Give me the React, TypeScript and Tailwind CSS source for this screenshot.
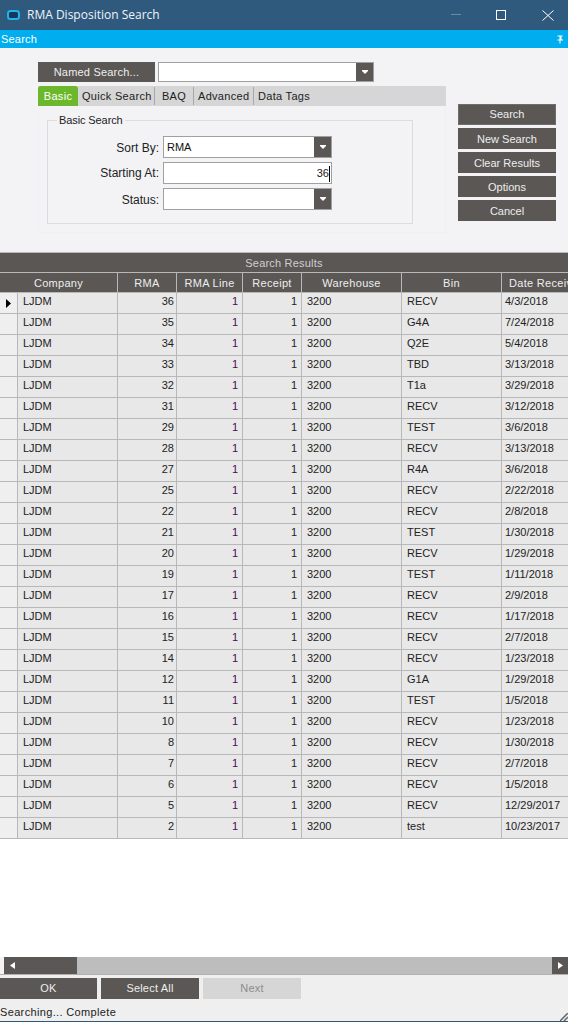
import React from "react";

const rows: [number, string, string][] = [
  [36, "RECV", "4/3/2018"], [35, "G4A", "7/24/2018"], [34, "Q2E", "5/4/2018"], [33, "TBD", "3/13/2018"],
  [32, "T1a", "3/29/2018"], [31, "RECV", "3/12/2018"], [29, "TEST", "3/6/2018"], [28, "RECV", "3/13/2018"],
  [27, "R4A", "3/6/2018"], [25, "RECV", "2/22/2018"], [22, "RECV", "2/8/2018"], [21, "TEST", "1/30/2018"],
  [20, "RECV", "1/29/2018"], [19, "TEST", "1/11/2018"], [17, "RECV", "2/9/2018"], [16, "RECV", "1/17/2018"],
  [15, "RECV", "2/7/2018"], [14, "RECV", "1/23/2018"], [12, "G1A", "1/29/2018"], [11, "TEST", "1/5/2018"],
  [10, "RECV", "1/23/2018"], [8, "RECV", "1/30/2018"], [7, "RECV", "2/7/2018"], [6, "RECV", "1/5/2018"],
  [5, "RECV", "12/29/2017"], [2, "test", "10/23/2017"],
];

const headers = ["RMA", "RMA Line", "Receipt", "Warehouse", "Bin", "Date Received"];
const gridCols = "grid grid-cols-[18px_100px_59px_66px_59px_100px_100px_91px] w-[593px]";

function DropButton() {
  return (
    <span className="w-[17px] self-stretch bg-[#5a5755] flex items-center justify-center">
      <svg width="6" height="4" viewBox="0 0 6 4"><path d="M0 0h6v1L3 4 0 1z" fill="#fff" /></svg>
    </span>
  );
}

function Combo({ className, value }: { className: string; value?: string }) {
  return (
    <div className={"flex border border-[#a0a0a0] bg-white " + className}>
      <span className="flex-1 pl-[3px] text-[11px] leading-[20px] text-[#111]">{value}</span>
      <DropButton />
    </div>
  );
}

function SideButton({ label, className = "" }: { label: string; className?: string }) {
  return (
    <div className={"h-[21px] w-[98px] bg-[#5a5755] text-[#eee] text-[11px] text-center " + className}>{label}</div>
  );
}

function Tab({ label, className }: { label: string; className: string }) {
  return <div className={"my-[1px] text-[11px] leading-[18px] text-[#222] tracking-[0.3px] " + className}>{label}</div>;
}

function FieldRow({ label, className, children }: { label: string; className: string; children: React.ReactNode }) {
  return (
    <div className="flex items-center h-[22px]">
      <span className={"w-[111px] mr-[4px] text-right text-[12px] text-[#222] whitespace-nowrap " + className}>{label}</span>
      {children}
    </div>
  );
}

export default function App() {
  return (
    <div className="w-[568px] h-[1022px] overflow-hidden flex flex-col bg-[#f3f3f6] font-['Liberation_Sans',Arial,sans-serif]">
      {/* Title bar */}
      <div className="h-[30px] bg-[#2f5a7e] flex items-center shrink-0">
        <svg className="ml-[7px]" width="13" height="10" viewBox="0 0 13 10">
          <rect x="1" y="1" width="11" height="8" rx="2.5" fill="#17365a" stroke="#1fb4ea" strokeWidth="2" />
        </svg>
        <span className="ml-[7px] text-[12px] text-[#f0f4f8] font-['Open_Sans',sans-serif] flex-1">RMA Disposition Search</span>
        <svg className="mr-[35px]" width="10" height="2" viewBox="0 0 10 2"><rect width="10" height="1" fill="#6d8aa3" /></svg>
        <svg className="mr-[36px]" width="10" height="10" viewBox="0 0 10 10"><rect x="0.5" y="0.5" width="9" height="9" fill="none" stroke="#fff" /></svg>
        <svg className="mr-[14px]" width="12" height="11" viewBox="0 0 12 11"><path d="M0.5 0.5l11 10M11.5 0.5l-11 10" stroke="#fff" fill="none" /></svg>
      </div>
      {/* Search strip */}
      <div className="h-[18px] bg-[#00adef] shrink-0 flex items-center justify-between pl-px">
        <span className="text-[11px] text-white tracking-[0.2px] leading-[18px]">Search</span>
        <svg className="mr-[4px]" width="8" height="9" viewBox="0 0 8 9">
          <path d="M1.500 0.500h5v1h-1v3h1.500v1h-5.500v-1h1.500v-3h-1.500zM3.500 1.500h0.500v3h-0.500zM3.500 5.500h1v3h-1z" fill="#fff" fillRule="evenodd" />
        </svg>
      </div>
      {/* Search form */}
      <div className="h-[204px] shrink-0 pt-[14px] pl-[38px] flex">
        <div className="w-[408px]">
          <div className="flex h-[20px]">
            <div className="w-[117px] bg-[#5a5755] text-[#eee] text-[11px] leading-[20px] text-center tracking-[0.2px]">Named Search...</div>
            <Combo className="ml-[3px] w-[216px]" />
          </div>
          <div className="mt-[4px] h-[20px] bg-[#d6d6d6] flex">
            <div className="w-[40px] bg-[#6cb82c] rounded-t-[3px] text-white text-[11px] leading-[20px] text-center tracking-[0.3px]">Basic</div>
            <Tab label="Quick Search" className="w-[77px] pl-[4px] border-r border-[#a8a8a8]" />
            <Tab label="BAQ" className="w-[39px] text-center border-r border-[#a8a8a8]" />
            <Tab label="Advanced" className="w-[60px] pl-[4px] border-r border-[#a8a8a8]" />
            <Tab label="Data Tags" className="w-[60px] pl-[4px]" />
          </div>
          <div className="h-[127px] border border-t-0 border-[#f0f0f2] pl-[8px] pt-[14px]">
            <div className="relative w-[366px] h-[104px] border border-[#dcdce0]">
              <span className="absolute left-[9px] top-[-7px] px-[2px] bg-[#f3f3f6] text-[11px] leading-[13px] text-[#222] tracking-[-0.1px]">Basic Search</span>
              <div className="pt-[15px] flex flex-col gap-[4px]">
                <FieldRow label="Sort By:" className="mt-[2px]"><Combo className="w-[169px] h-[22px]" value="RMA" /></FieldRow>
                <FieldRow label="Starting At:" className="mb-[1px]">
                  <div className="w-[169px] h-[22px] border border-[#a0a0a0] bg-white text-right text-[11px] leading-[20px] pr-px text-[#222]">
                    36<span className="inline-block w-px h-[16px] bg-black align-middle" />
                  </div>
                </FieldRow>
                <FieldRow label="Status:" className="mt-[2px]"><Combo className="w-[169px] h-[22px]" /></FieldRow>
              </div>
            </div>
          </div>
        </div>
        <div className="ml-[12px] pt-[42px] flex flex-col gap-[3px]">
          <SideButton label="Search" className="border border-[#706d6b] leading-[19px]" />
          <SideButton label="New Search" className="leading-[23px]" />
          <SideButton label="Clear Results" className="leading-[23px]" />
          <SideButton label="Options" className="leading-[23px]" />
          <SideButton label="Cancel" className="leading-[23px]" />
        </div>
      </div>
      {/* Results */}
      <div className="h-[20px] shrink-0 bg-[#5a5755] border-t border-[#b8b8b8] text-center text-[#cfcfcf] text-[11px] leading-[20px] tracking-[0.2px]">Search Results</div>
      <div className="h-[685px] shrink-0 bg-white overflow-hidden">
        <div className={gridCols + " h-[20px] bg-[#5a5755] border-t border-[#b8b8b8] text-[#eee] text-[11px] leading-[20px] tracking-[0.3px]"}>
          <div className="col-span-2 border-r border-[#b8b8b8] text-center">Company</div>
          {headers.map((h) => (
            <div key={h} className="border-r border-[#b8b8b8] text-center whitespace-nowrap overflow-hidden">{h}</div>
          ))}
        </div>
        {rows.map((r, i) => (
          <div key={r[0]} className={gridCols + " h-[21px] border-t border-[#b8b8b8] text-[11px] leading-[17px] text-[#222]"}>
            <div className="bg-[#efefef] border-r border-[#b8b8b8] flex items-center justify-center">
              {i === 0 && <svg width="5" height="9" viewBox="0 0 5 9"><path d="M0 0l5 4.500-5 4.500z" fill="#000" /></svg>}
            </div>
            <div className="bg-[#e8e8e8] border-r border-[#b8b8b8] pl-[5px]">LJDM</div>
            <div className="bg-[#e8e8e8] border-r border-[#b8b8b8] text-right pr-[2px]">{r[0]}</div>
            <div className="bg-[#e8e8e8] border-r border-[#b8b8b8] text-right pr-[4px] text-[#4a0a52]">1</div>
            <div className="bg-[#e8e8e8] border-r border-[#b8b8b8] text-right pr-[4px]">1</div>
            <div className="bg-[#e8e8e8] border-r border-[#b8b8b8] pl-[5px]">3200</div>
            <div className="bg-[#e8e8e8] border-r border-[#b8b8b8] pl-[5px]">{r[1]}</div>
            <div className="bg-[#e8e8e8] pl-[3px]">{r[2]}</div>
          </div>
        ))}
        <div className="w-[568px] border-t border-[#b8b8b8]" />
      </div>
      {/* Scrollbar */}
      <div className="h-[18px] shrink-0 bg-[#bdbdbd] border-b border-[#b0b0b0] flex">
        <div className="w-[4px] bg-[#f3f3f3]" />
        <div className="w-[73px] bg-[#5a5755] pl-[6px] flex items-center">
          <svg width="5" height="7" viewBox="0 0 5 7"><path d="M5 0v7L0 3.500z" fill="#fff" /></svg>
        </div>
        <div className="flex-1" />
        <div className="w-[16px] bg-[#5a5755] flex items-center justify-center">
          <svg width="5" height="7" viewBox="0 0 5 7"><path d="M0 0v7l5-3.500z" fill="#fff" /></svg>
        </div>
      </div>
      {/* Footer */}
      <div className="flex-1 bg-[#efefef] border-b border-[#2f5a7e] relative">
        <div className="flex gap-[4px] pt-[3px]">
          <div className="w-[97px] h-[21px] bg-[#5a5755] text-[#eee] text-[11px] leading-[21px] text-center tracking-[0.2px]">OK</div>
          <div className="w-[98px] h-[21px] bg-[#5a5755] text-[#eee] text-[11px] leading-[21px] text-center tracking-[0.2px]">Select All</div>
          <div className="w-[98px] h-[21px] bg-[#d6d6d6] text-[#8c8c8c] text-[11px] leading-[21px] text-center tracking-[0.2px]">Next</div>
        </div>
        <div className="text-[11px] leading-[17px] pt-[5px] text-[#222] tracking-[0.35px]">Searching... Complete</div>
        <svg className="absolute right-0 bottom-0" width="8" height="8" viewBox="0 0 8 8">
          <path d="M0 8l8-8M4 8l4-4" stroke="#666" strokeWidth="1.500" fill="none" />
        </svg>
      </div>
    </div>
  );
}
